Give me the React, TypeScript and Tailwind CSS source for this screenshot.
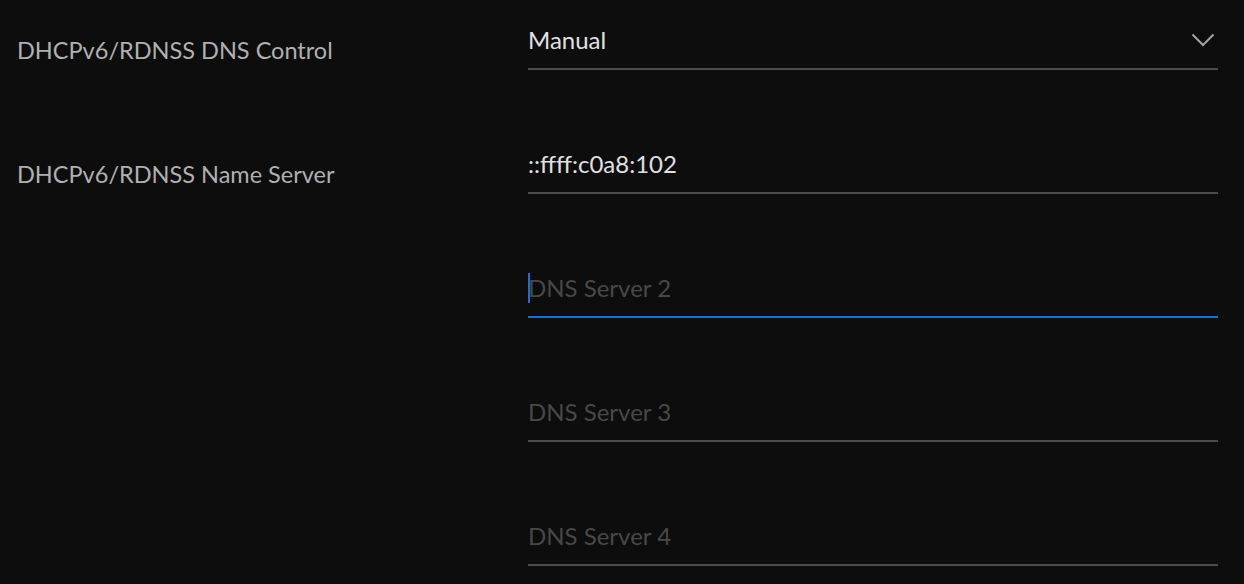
import React from 'react';

type Row = {
  label?: string;
  value?: string;
  placeholder?: string;
  select?: boolean;
  focused?: boolean;
};

const rows: Row[] = [
  { label: 'DHCPv6/RDNSS DNS Control', value: 'Manual', select: true },
  { label: 'DHCPv6/RDNSS Name Server', value: '::ffff:c0a8:102' },
  { placeholder: 'DNS Server 2', focused: true },
  { placeholder: 'DNS Server 3' },
  { placeholder: 'DNS Server 4' },
];

function Chevron() {
  return (
    <svg width="24" height="14" viewBox="0 0 24 14" className="shrink-0">
      <polyline points="1.5,1.5 12,12 22.5,1.5" fill="none" stroke="#a3a3a3" strokeWidth="2" />
    </svg>
  );
}

export default function App() {
  return (
    <div
      className="min-h-[584px] w-full bg-[#0d0d0d] pl-[17px] pr-[26px] pt-[12px]"
      style={{ fontFamily: 'Lato, "Open Sans", sans-serif' }}
    >
      <div className="flex flex-col gap-[66px]">
        {rows.map((row, i) => (
          <div key={i} className="flex">
            <div className="w-[511px] shrink-0 pt-[24px] text-[23.5px] leading-[28px] text-[#b0b0b0]">
              {row.label}
            </div>
            <div
              className={
                'flex h-[58px] flex-1 items-center border-b-2 ' +
                (row.focused ? 'border-[#1b6fd8]' : 'border-[#4c4c4c]')
              }
            >
              <div className="flex h-[56px] flex-1 items-center text-[24px] leading-[28px]">
                {row.focused && <span className="mr-[-2px] inline-block h-[30px] w-[2px] bg-[#1b6fd8]" />}
                {row.value ? (
                  <span className="text-[#e0e0e0]">{row.value}</span>
                ) : (
                  <span className="text-[#484848]">{row.placeholder}</span>
                )}
              </div>
              {row.select && (
                <div className="mr-[3px] flex items-center">
                  <Chevron />
                </div>
              )}
            </div>
          </div>
        ))}
      </div>
    </div>
  );
}
